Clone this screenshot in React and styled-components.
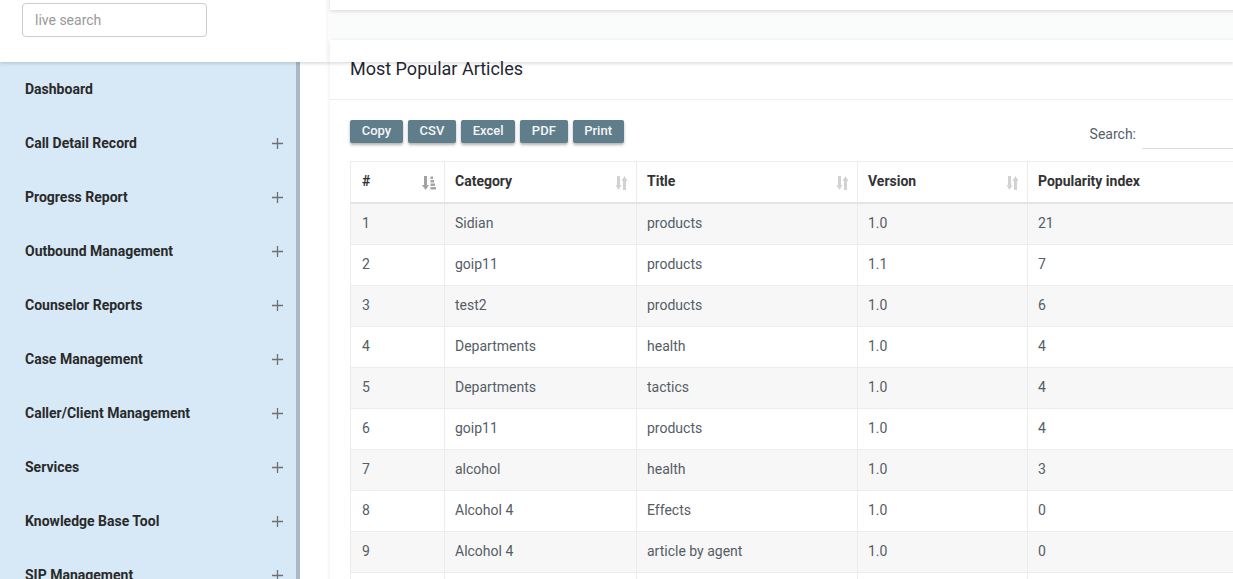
import React from "react";
import styled, { createGlobalStyle } from "styled-components";

const GlobalStyle = createGlobalStyle`
    html, body {
        margin: 0;
        padding: 0;
        overflow: hidden;
        background: #fafbfb;
        font-family: Roboto, "Liberation Sans", Arial, sans-serif;
    }
`;

const menu = [
    { label: "Dashboard", sub: false },
    { label: "Call Detail Record", sub: true },
    { label: "Progress Report", sub: true },
    { label: "Outbound Management", sub: true },
    { label: "Counselor Reports", sub: true },
    { label: "Case Management", sub: true },
    { label: "Caller/Client Management", sub: true },
    { label: "Services", sub: true },
    { label: "Knowledge Base Tool", sub: true },
    { label: "SIP Management", sub: true },
];

const rows = [
    ["1", "Sidian", "products", "1.0", "21"],
    ["2", "goip11", "products", "1.1", "7"],
    ["3", "test2", "products", "1.0", "6"],
    ["4", "Departments", "health", "1.0", "4"],
    ["5", "Departments", "tactics", "1.0", "4"],
    ["6", "goip11", "products", "1.0", "4"],
    ["7", "alcohol", "health", "1.0", "3"],
    ["8", "Alcohol 4", "Effects", "1.0", "0"],
    ["9", "Alcohol 4", "article by agent", "1.0", "0"],
    ["10", "Alcohol 4", "article", "1.0", "0"],
];

const columns = [
    { title: "#", width: 94, sort: "asc" },
    { title: "Category", width: 192, sort: "both" },
    { title: "Title", width: 221, sort: "both" },
    { title: "Version", width: 170, sort: "both" },
    { title: "Popularity index", width: 230, sort: "both" },
];

const Plus = () => (
    <svg width="11" height="11" viewBox="0 0 11 11">
        <path d="M5.5 0v11M0 5.5h11" stroke="#6f6f6f" strokeWidth="1.3" />
    </svg>
);

// sort-amount-asc and the plain two-arrow sort glyph
const SortIcon = ({ type }) =>
    type === "asc" ? (
        <svg width="14" height="14" viewBox="0 0 14 14">
            <path d="M3.5 0v10" stroke="#a3a3a3" strokeWidth="3" />
            <path d="M0 9l3.5 5 3.5-5z" fill="#a3a3a3" />
            <rect x="8.5" y="0.5" width="2.5" height="2.5" fill="#a3a3a3" />
            <rect x="8.5" y="4" width="3.5" height="2.5" fill="#a3a3a3" />
            <rect x="8.5" y="7.5" width="4.5" height="2.5" fill="#a3a3a3" />
            <rect x="8.5" y="11" width="5.5" height="2.5" fill="#a3a3a3" />
        </svg>
    ) : (
        <svg width="13" height="14" viewBox="0 0 13 14">
            <path d="M3.5 0v10" stroke="#d2d2d2" strokeWidth="3" />
            <path d="M0.5 9l3 5 3-5z" fill="#d2d2d2" />
            <path d="M9.5 4v10" stroke="#d2d2d2" strokeWidth="3" />
            <path d="M6.5 5l3-5 3 5z" fill="#d2d2d2" />
        </svg>
    );

const App = () => {
    return (
        <>
            <GlobalStyle />
            <TopBar>
                <TopBrand>
                    <LiveSearch placeholder="live search" />
                </TopBrand>
            </TopBar>
            <Layout>
                <LeftColumn>
                    <HeaderSpace />
                    <Sidebar>
                        {menu.map((m) => (
                            <MenuItem key={m.label}>
                                <span>{m.label}</span>
                                {m.sub && <Plus />}
                            </MenuItem>
                        ))}
                    </Sidebar>
                </LeftColumn>
                <Main>
                    <TopCard />
                    <Card>
                        <CardTitle>Most Popular Articles</CardTitle>
                        <CardBody>
                            <Toolbar>
                                <Buttons>
                                    {["Copy", "CSV", "Excel", "PDF", "Print"].map((b) => (
                                        <ExportButton key={b}>{b}</ExportButton>
                                    ))}
                                </Buttons>
                                <SearchLabel>
                                    Search:
                                    <SearchInput />
                                </SearchLabel>
                            </Toolbar>
                            <Table>
                                <colgroup>
                                    {columns.map((c) => (
                                        <col key={c.title} style={{ width: c.width }} />
                                    ))}
                                </colgroup>
                                <thead>
                                    <tr>
                                        {columns.map((c) => (
                                            <Th key={c.title}>
                                                {c.title}
                                                <SortWrap>
                                                    <SortIcon type={c.sort} />
                                                </SortWrap>
                                            </Th>
                                        ))}
                                    </tr>
                                </thead>
                                <tbody>
                                    {rows.map((r, i) => (
                                        <Tr key={i} $odd={i % 2 === 0}>
                                            {r.map((v, j) => (
                                                <Td key={j}>{v}</Td>
                                            ))}
                                        </Tr>
                                    ))}
                                </tbody>
                            </Table>
                        </CardBody>
                    </Card>
                </Main>
            </Layout>
        </>
    );
};

export default App;

const TopBar = styled.div`
    position: fixed;
    top: 0;
    left: 0;
    right: 0;
    height: 62px;
    z-index: 10;
    box-shadow: 0 2px 3px rgba(0, 0, 0, 0.12);
    pointer-events: none;
`;

const TopBrand = styled.div`
    width: 326px;
    height: 62px;
    background: #ffffff;
    display: flex;
    align-items: flex-start;
    padding: 3px 0 0 22px;
    box-sizing: border-box;
    box-shadow: 2px 0 4px rgba(0, 0, 0, 0.04);
`;

const LiveSearch = styled.input`
    width: 185px;
    height: 34px;
    box-sizing: border-box;
    border: 1px solid #cccccc;
    border-radius: 4px;
    padding: 0 12px;
    font-family: Roboto, "Liberation Sans", Arial, sans-serif;
    font-size: 14px;
    color: #555;
    outline: none;
    &::placeholder {
        color: #999999;
    }
`;

const Layout = styled.div`
    display: flex;
    height: 579px;
`;

const LeftColumn = styled.div`
    width: 330px;
    flex: none;
    display: flex;
    flex-direction: column;
    background: #ffffff;
`;

const HeaderSpace = styled.div`
    height: 62px;
    flex: none;
`;

const Sidebar = styled.nav`
    width: 296px;
    flex: 1;
    background: #d7e9f7;
    border-right: 4px solid #aab9c5;
    overflow: hidden;
`;

const MenuItem = styled.div`
    height: 54px;
    display: flex;
    align-items: center;
    justify-content: space-between;
    padding: 0 13px 0 25px;
    font-size: 14px;
    font-weight: 700;
    color: #2a2a2a;
`;

const Main = styled.main`
    flex: 1;
    min-width: 0;
    display: flex;
    flex-direction: column;
    gap: 30px;
    margin-top: -20px;
`;

const TopCard = styled.div`
    height: 30px;
    width: 960px;
    flex: none;
    background: #ffffff;
    box-shadow: 0 1px 4px rgba(0, 0, 0, 0.15);
`;

const Card = styled.section`
    width: 960px;
    flex: none;
    background: #ffffff;
    box-shadow: 0 1px 4px rgba(0, 0, 0, 0.1);
`;

const CardTitle = styled.h2`
    margin: 0;
    height: 60px;
    box-sizing: border-box;
    display: flex;
    align-items: center;
    padding: 0 20px 2px;
    font-size: 18px;
    font-weight: 400;
    color: #1f2733;
    border-bottom: 1px solid #eeeeee;
`;

const CardBody = styled.div`
    padding: 20px;
`;

const Toolbar = styled.div`
    display: flex;
    justify-content: space-between;
    align-items: center;
    height: 23px;
    margin-bottom: 18px;
`;

const Buttons = styled.div`
    display: flex;
    gap: 5px;
`;

const ExportButton = styled.button`
    height: 23px;
    padding: 0 11.7px 2px;
    border: none;
    border-radius: 2px;
    background: #607d8b;
    color: #f4f6f7;
    font-family: Roboto, "Liberation Sans", Arial, sans-serif;
    font-size: 13px;
    font-weight: 500;
    box-shadow: 0 2px 3px rgba(0, 0, 0, 0.3);
`;

const SearchLabel = styled.label`
    display: flex;
    align-items: center;
    gap: 6px;
    font-size: 14px;
    color: #555e68;
    padding-top: 4px;
    margin-right: -20px;
`;

const SearchInput = styled.input`
    width: 144px;
    height: 28px;
    border: none;
    border-bottom: 1px solid #dddddd;
    outline: none;
    background: transparent;
`;

const Table = styled.table`
    border-collapse: collapse;
    table-layout: fixed;
    width: 907px;
    font-size: 14px;
`;

const Th = styled.th`
    position: relative;
    height: 38px;
    text-align: left;
    padding: 0 12px 2px 10px;
    font-weight: 700;
    color: #333333;
    border: 1px solid #ececec;
    border-bottom: 2px solid #e4e4e4;
    &:first-child {
        padding-left: 11px;
    }
`;

const SortWrap = styled.span`
    position: absolute;
    right: 8px;
    top: 14px;
    line-height: 0;
`;

const Tr = styled.tr`
    background: ${(p) => (p.$odd ? "#f7f7f7" : "#ffffff")};
`;

const Td = styled.td`
    height: 38px;
    padding: 0 10px 2px;
    color: #555d66;
    border: 1px solid #ececec;
    &:first-child {
        padding-left: 11px;
    }
`;
